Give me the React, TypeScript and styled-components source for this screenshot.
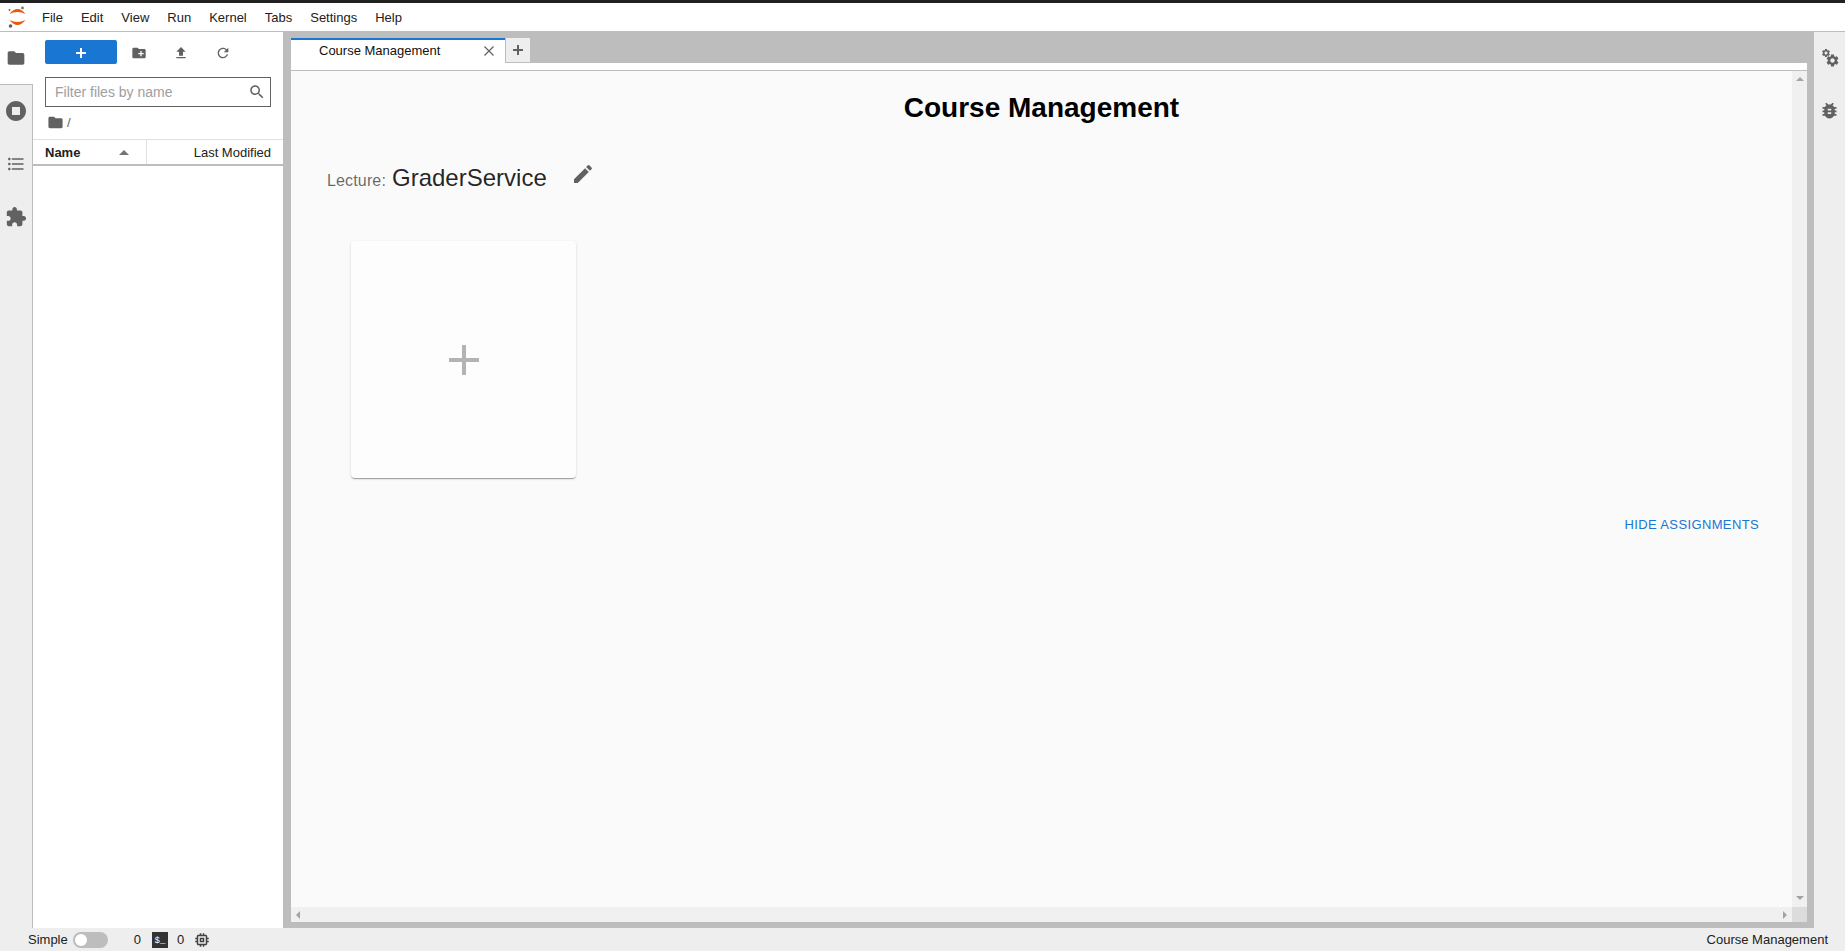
import React from "react";
import styled, { createGlobalStyle } from "styled-components";

const GlobalStyle = createGlobalStyle`
  html, body {
    margin: 0;
    padding: 0;
    height: 100%;
    overflow: hidden;
    font-family: "Liberation Sans", Arial, sans-serif;
    color: #212121;
  }
  * { box-sizing: border-box; }
`;

const Shell = styled.div`
  display: flex;
  flex-direction: column;
  width: 1845px;
  height: 951px;
  background: #eeeeee;
`;

const MenuBar = styled.div`
  display: flex;
  align-items: center;
  height: 32px;
  flex: none;
  background: #fff;
  border-top: 3px solid #212121;
  border-bottom: 1px solid #bdbdbd;
  font-size: 13px;
`;

const LogoSlot = styled.div`
  display: flex;
  align-items: center;
  justify-content: center;
  width: 33px;
  height: 100%;
`;

const MenuItem = styled.div`
  padding: 2px 9px 0;
  line-height: 28px;
  color: #212121;
`;

const Body = styled.div`
  display: flex;
  flex: 1;
  min-height: 0;
`;

const SideBar = styled.div<{ $width: number }>`
  display: flex;
  flex-direction: column;
  flex: none;
  width: ${({ $width }) => $width}px;
  background: #eeeeee;
`;

const SideTab = styled.div<{ $active?: boolean; $edge?: boolean }>`
  display: flex;
  align-items: center;
  justify-content: center;
  height: 53px;
  padding: ${({ $active }) => ($active ? "0 1px 0 0" : "0 0 2px 0")};
  color: #616161;
  background: ${({ $active }) => ($active ? "#fff" : "transparent")};
  border-right: ${({ $active, $edge }) => ($edge && !$active ? "1px solid #bdbdbd" : "none")};
  border-bottom: ${({ $active }) => ($active ? "1px solid #bdbdbd" : "none")};
`;

const Rest = styled.div`
  flex: 1;
  border-right: 1px solid #bdbdbd;
`;

const FilePanel = styled.div`
  display: flex;
  flex-direction: column;
  flex: none;
  width: 250px;
  background: #fff;
`;

const FileToolbar = styled.div`
  display: flex;
  align-items: center;
  height: 24px;
  margin: 8px 0 0 12px;
`;

const NewButton = styled.div`
  display: flex;
  align-items: center;
  justify-content: center;
  width: 72px;
  height: 24px;
  margin-right: 1px;
  padding-top: 1px;
  background: #1976d2;
  border-radius: 2px;
  color: #fff;
`;

const ToolButton = styled.div`
  display: flex;
  align-items: center;
  justify-content: center;
  width: 42px;
  padding-top: 1px;
  color: #616161;
`;

const FilterBox = styled.div`
  display: flex;
  align-items: center;
  justify-content: space-between;
  width: 226px;
  height: 30px;
  margin: 13px 0 0 12px;
  padding: 0 4px 0 9px;
  border: 1px solid #616161;
  color: #616161;
`;

const FilterHint = styled.span`
  font-size: 14px;
  color: #9e9e9e;
`;

const Crumbs = styled.div`
  display: flex;
  align-items: center;
  gap: 3px;
  height: 18px;
  margin: 6px 0 0 14px;
  font-size: 13px;
  color: #616161;
`;

const ListHeader = styled.div`
  display: flex;
  height: 27px;
  margin-top: 8px;
  font-size: 13px;
  border-top: 1px solid #e0e0e0;
  border-bottom: 2px solid #bdbdbd;
`;

const NameColumn = styled.div`
  display: flex;
  align-items: center;
  justify-content: space-between;
  width: 114px;
  padding: 0 17px 0 12px;
  font-weight: 700;
  border-right: 1px solid #e0e0e0;
`;

const SortCaret = styled.span`
  width: 0;
  height: 0;
  border-left: 5px solid transparent;
  border-right: 5px solid transparent;
  border-bottom: 5px solid #757575;
`;

const ModifiedColumn = styled.div`
  display: flex;
  align-items: center;
  justify-content: flex-end;
  flex: 1;
  padding-right: 12px;
`;

const MainArea = styled.div`
  display: flex;
  flex-direction: column;
  flex: 1;
  min-width: 0;
  padding: 6px 7px 6px 8px;
  background: #bdbdbd;
`;

const TabStrip = styled.div`
  display: flex;
  height: 25px;
  flex: none;
`;

const DocTab = styled.div`
  display: flex;
  align-items: center;
  justify-content: space-between;
  width: 214px;
  padding: 0 10px 2px 28px;
  background: #fff;
  border-top: 2px solid #1976d2;
  font-size: 13px;
  color: #111;
`;

const AddTab = styled.div`
  display: flex;
  align-items: center;
  justify-content: center;
  width: 26px;
  height: 25px;
  background: #eeeeee;
  border: 1px solid #bdbdbd;
  border-top: none;
  color: #616161;
`;

const TabGap = styled.div`
  height: 8px;
  flex: none;
  background: #fff;
  border-bottom: 1px solid #bdbdbd;
`;

const ScrollGrid = styled.div`
  display: grid;
  flex: 1;
  min-height: 0;
  grid-template-columns: 1fr 15px;
  grid-template-rows: 1fr 15px;
`;

const Content = styled.div`
  background: #fafafa;
  overflow: hidden;
`;

const Title = styled.h1`
  margin: 20px 0 0;
  font-size: 28px;
  line-height: 34px;
  font-weight: 700;
  text-align: center;
  color: #000;
`;

const LectureRow = styled.div`
  display: flex;
  align-items: baseline;
  margin: 39px 0 0 36px;
  height: 34px;
`;

const LectureLabel = styled.span`
  font-size: 16px;
  letter-spacing: 0.15px;
  color: rgba(0, 0, 0, 0.6);
  margin-right: 6px;
`;

const LectureName = styled.span`
  font-size: 24px;
  color: rgba(0, 0, 0, 0.87);
`;

const EditSlot = styled.span`
  align-self: flex-start;
  margin: -2px 0 0 24px;
  color: #616161;
`;

const AddCard = styled.div`
  display: flex;
  align-items: center;
  justify-content: center;
  width: 225px;
  height: 237px;
  margin: 43px 0 0 60px;
  background: #fdfdfd;
  border-radius: 4px;
  box-shadow: 0 2px 1px -1px rgba(0, 0, 0, 0.2), 0 1px 1px 0 rgba(0, 0, 0, 0.14), 0 1px 3px 0 rgba(0, 0, 0, 0.12);
  color: #b3b3b3;
`;

const ActionRow = styled.div`
  display: flex;
  justify-content: flex-end;
  margin-top: 36px;
  padding-right: 33px;
`;

const TextAction = styled.span`
  font-size: 13px;
  line-height: 22px;
  letter-spacing: 0.37px;
  color: #1976d2;
`;

const Track = styled.div<{ $axis: "x" | "y" }>`
  display: flex;
  flex-direction: ${({ $axis }) => ($axis === "y" ? "column" : "row")};
  justify-content: space-between;
  align-items: center;
  padding: ${({ $axis }) => ($axis === "y" ? "6px 0 7px" : "0 5px")};
  background: #f0f0f0;
`;

const Corner = styled.div`
  background: #dcdcdc;
`;

const Arrow = styled.span<{ $dir: "up" | "down" | "left" | "right" }>`
  width: 0;
  height: 0;
  border: 4px solid transparent;
  ${({ $dir }) =>
    $dir === "up"
      ? "border-top: none; border-bottom: 4px solid #a3a3a3;"
      : $dir === "down"
      ? "border-bottom: none; border-top: 4px solid #a3a3a3;"
      : $dir === "left"
      ? "border-left: none; border-right: 4px solid #a3a3a3;"
      : "border-right: none; border-left: 4px solid #a3a3a3;"}
`;

const StatusBar = styled.div`
  display: flex;
  align-items: center;
  justify-content: space-between;
  height: 23px;
  flex: none;
  padding: 0 17px 0 28px;
  font-size: 13px;
  background: #eeeeee;
`;

const StatusLeft = styled.div`
  display: flex;
  align-items: center;
`;

const Toggle = styled.div`
  display: flex;
  align-items: center;
  width: 35px;
  height: 16px;
  margin: 0 26px 0 5px;
  padding-left: 2px;
  border-radius: 8px;
  background: #bdbdbd;

  &::before {
    content: "";
    width: 12px;
    height: 12px;
    border-radius: 50%;
    background: #fff;
  }
`;

const TerminalBadge = styled.div`
  display: flex;
  align-items: flex-end;
  justify-content: center;
  width: 16px;
  height: 16px;
  margin: 0 9px 0 11px;
  padding-bottom: 1px;
  background: #333;
  color: #fff;
  font-family: "Liberation Mono", monospace;
  font-size: 9px;
  line-height: 11px;
`;

const ChipSlot = styled.div`
  display: flex;
  margin-left: 9px;
  color: #424242;
`;

const Icon: React.FC<{ d: string; size?: number }> = ({ d, size = 24 }) => (
  <svg width={size} height={size} viewBox="0 0 24 24" fill="currentColor" style={{ display: "block" }}>
    <path d={d} />
  </svg>
);

const icons = {
  folder: "M10 4H4c-1.1 0-1.99.9-1.99 2L2 18c0 1.1.9 2 2 2h16c1.1 0 2-.9 2-2V8c0-1.1-.9-2-2-2h-8l-2-2z",
  newFolder:
    "M20 6h-8l-2-2H4c-1.11 0-1.99.89-1.99 2L2 18c0 1.11.89 2 2 2h16c1.11 0 2-.89 2-2V8c0-1.11-.89-2-2-2zm-1 8h-3v3h-2v-3h-3v-2h3V9h2v3h3v2z",
  upload: "M9 16h6v-6h4l-7-7-7 7h4zm-4 2h14v2H5z",
  refresh:
    "M17.65 6.35C16.2 4.9 14.21 4 12 4c-4.42 0-7.99 3.58-7.99 8s3.57 8 7.99 8c3.73 0 6.84-2.55 7.73-6h-2.08c-.82 2.33-3.04 4-5.65 4-3.31 0-6-2.69-6-6s2.69-6 6-6c1.66 0 3.14.69 4.22 1.78L13 11h7V4l-2.35 2.35z",
  stop: "M12 2C6.48 2 2 6.48 2 12s4.48 10 10 10 10-4.48 10-10S17.52 2 12 2zm4 14H8V8h8v8z",
  list: "M4 10.5c-.83 0-1.5.67-1.5 1.5s.67 1.5 1.5 1.5 1.5-.67 1.5-1.5-.67-1.5-1.5-1.5zm0-6c-.83 0-1.5.67-1.5 1.5S3.17 7.5 4 7.5 5.5 6.83 5.5 6 4.83 4.5 4 4.5zm0 12c-.83 0-1.5.68-1.5 1.5s.68 1.5 1.5 1.5 1.5-.68 1.5-1.5-.67-1.5-1.5-1.5zM7 19h14v-2H7v2zm0-6h14v-2H7v2zm0-8v2h14V5H7z",
  extension:
    "M20.5 11H19V7c0-1.1-.9-2-2-2h-4V3.5C13 2.12 11.88 1 10.5 1S8 2.12 8 3.5V5H4c-1.1 0-1.99.9-1.99 2v3.8H3.5c1.49 0 2.7 1.21 2.7 2.7s-1.21 2.7-2.7 2.7H2V20c0 1.1.9 2 2 2h3.8v-1.5c0-1.49 1.21-2.7 2.7-2.7 1.49 0 2.7 1.21 2.7 2.7V22H17c1.1 0 2-.9 2-2v-4h1.5c1.38 0 2.5-1.12 2.5-2.5S21.88 11 20.5 11z",
  search:
    "M15.5 14h-.79l-.28-.27C15.41 12.59 16 11.11 16 9.5 16 5.91 13.09 3 9.5 3S3 5.91 3 9.5 5.91 16 9.5 16c1.61 0 3.09-.59 4.23-1.57l.27.28v.79l5 4.99L20.49 19l-4.99-5zm-6 0C7.01 14 5 11.99 5 9.5S7.01 5 9.5 5 14 7.01 14 9.5 11.99 14 9.5 14z",
  edit: "M3 17.25V21h3.75L17.81 9.94l-3.75-3.75L3 17.25zM20.71 7.04c.39-.39.39-1.02 0-1.41l-2.34-2.34a.9959.9959 0 0 0-1.41 0l-1.83 1.83 3.75 3.75 1.83-1.83z",
  bug: "M20 8h-2.81c-.45-.78-1.07-1.45-1.82-1.96L17 4.41 15.59 3l-2.17 2.17C12.96 5.06 12.49 5 12 5c-.49 0-.96.06-1.41.17L8.41 3 7 4.41l1.62 1.63C7.88 6.55 7.26 7.22 6.81 8H4v2h2.09c-.05.33-.09.66-.09 1v1H4v2h2v1c0 .34.04.67.09 1H4v2h2.81c1.04 1.79 2.97 3 5.19 3s4.15-1.21 5.19-3H20v-2h-2.09c.05-.33.09-.66.09-1v-1h2v-2h-2v-1c0-.34-.04-.67-.09-1H20V8zm-6 8h-4v-2h4v2zm0-4h-4v-2h4v2z",
  chip: "M15 9H9v6h6V9zm-2 4h-2v-2h2v2zm8-2V9h-2V7c0-1.1-.9-2-2-2h-2V3h-2v2h-2V3H9v2H7c-1.1 0-2 .9-2 2v2H3v2h2v2H3v2h2v2c0 1.1.9 2 2 2h2v2h2v-2h2v2h2v-2h2c1.1 0 2-.9 2-2v-2h2v-2h-2v-2h2zm-4 6H7V7h10v10z",
  gear: "M19.14 12.94c.04-.3.06-.61.06-.94 0-.32-.02-.64-.07-.94l2.03-1.58c.18-.14.23-.41.12-.61l-1.92-3.32c-.12-.22-.37-.29-.59-.22l-2.39.96c-.5-.38-1.03-.7-1.62-.94l-.36-2.54c-.04-.24-.24-.41-.48-.41h-3.84c-.24 0-.43.17-.47.41l-.36 2.54c-.59.24-1.13.57-1.62.94l-2.39-.96c-.22-.08-.47 0-.59.22L2.74 8.87c-.12.21-.08.47.12.61l2.03 1.58c-.05.3-.09.63-.09.94s.02.64.07.94l-2.03 1.58c-.18.14-.23.41-.12.61l1.92 3.32c.12.22.37.29.59.22l2.39-.96c.5.38 1.03.7 1.62.94l.36 2.54c.05.24.24.41.48.41h3.84c.24 0 .44-.17.47-.41l.36-2.54c.59-.24 1.13-.56 1.62-.94l2.39.96c.22.08.47 0 .59-.22l1.92-3.32c.12-.22.07-.47-.12-.61l-2.01-1.58zM12 15.6c-1.98 0-3.6-1.62-3.6-3.6s1.62-3.6 3.6-3.6 3.6 1.62 3.6 3.6-1.62 3.6-3.6 3.6z",
};

const JupyterLogo = () => (
  <svg width="18" height="22" viewBox="0 0 18 22">
    <path d="M1.5 8Q9.5-2 17.5 8 9.5 4 1.5 8z" fill="#e8590c" />
    <path d="M1.5 14Q9.5 24 17.5 14 9.5 18 1.5 14z" fill="#e8590c" />
    <circle cx="14.5" cy="2" r="1.4" fill="#757575" />
    <circle cx="1.5" cy="4" r="0.9" fill="#616161" />
    <circle cx="2.5" cy="20" r="1.8" fill="#616161" />
  </svg>
);

const GearsIcon = () => (
  <svg width="20" height="20" viewBox="0 0 20 20" fill="currentColor">
    <svg x="1" y="0" width="10" height="10" viewBox="0 0 24 24">
      <path d={icons.gear} />
    </svg>
    <svg x="5" y="5" width="15" height="15" viewBox="0 0 24 24">
      <path d={icons.gear} />
    </svg>
  </svg>
);

const CloseIcon = () => (
  <svg width="12" height="12" viewBox="0 0 12 12" stroke="#616161" strokeWidth="1.2" fill="none">
    <path d="M1.5 1.5l9 9M10.5 1.5l-9 9" />
  </svg>
);

const PlusIcon: React.FC<{ size: number; weight: number }> = ({ size, weight }) => (
  <svg width={size} height={size} viewBox={`0 0 ${size} ${size}`} fill="currentColor">
    <rect x={0} y={(size - weight) / 2} width={size} height={weight} />
    <rect x={(size - weight) / 2} y={0} width={weight} height={size} />
  </svg>
);

const menus = ["File", "Edit", "View", "Run", "Kernel", "Tabs", "Settings", "Help"];

export default function App() {
  return (
    <Shell>
      <GlobalStyle />
      <MenuBar>
        <LogoSlot>
          <JupyterLogo />
        </LogoSlot>
        {menus.map((m) => (
          <MenuItem key={m}>{m}</MenuItem>
        ))}
      </MenuBar>
      <Body>
        <SideBar $width={33}>
          <SideTab $active>
            <Icon d={icons.folder} size={20} />
          </SideTab>
          <SideTab $edge>
            <Icon d={icons.stop} size={24} />
          </SideTab>
          <SideTab $edge>
            <Icon d={icons.list} size={20} />
          </SideTab>
          <SideTab $edge>
            <Icon d={icons.extension} size={22} />
          </SideTab>
          <Rest />
        </SideBar>
        <FilePanel>
          <FileToolbar>
            <NewButton>
              <PlusIcon size={10} weight={2} />
            </NewButton>
            <ToolButton>
              <Icon d={icons.newFolder} size={16} />
            </ToolButton>
            <ToolButton>
              <Icon d={icons.upload} size={16} />
            </ToolButton>
            <ToolButton>
              <Icon d={icons.refresh} size={16} />
            </ToolButton>
          </FileToolbar>
          <FilterBox>
            <FilterHint>Filter files by name</FilterHint>
            <Icon d={icons.search} size={18} />
          </FilterBox>
          <Crumbs>
            <Icon d={icons.folder} size={17} />
            <span>/</span>
          </Crumbs>
          <ListHeader>
            <NameColumn>
              Name
              <SortCaret />
            </NameColumn>
            <ModifiedColumn>Last Modified</ModifiedColumn>
          </ListHeader>
        </FilePanel>
        <MainArea>
          <TabStrip>
            <DocTab>
              Course Management
              <CloseIcon />
            </DocTab>
            <AddTab>
              <PlusIcon size={10} weight={2} />
            </AddTab>
          </TabStrip>
          <TabGap />
          <ScrollGrid>
            <Content>
              <Title>Course Management</Title>
              <LectureRow>
                <LectureLabel>Lecture:</LectureLabel>
                <LectureName>GraderService</LectureName>
                <EditSlot>
                  <Icon d={icons.edit} />
                </EditSlot>
              </LectureRow>
              <AddCard>
                <PlusIcon size={30} weight={4} />
              </AddCard>
              <ActionRow>
                <TextAction>HIDE ASSIGNMENTS</TextAction>
              </ActionRow>
            </Content>
            <Track $axis="y">
              <Arrow $dir="up" />
              <Arrow $dir="down" />
            </Track>
            <Track $axis="x">
              <Arrow $dir="left" />
              <Arrow $dir="right" />
            </Track>
            <Corner />
          </ScrollGrid>
        </MainArea>
        <SideBar $width={31}>
          <SideTab>
            <GearsIcon />
          </SideTab>
          <SideTab>
            <Icon d={icons.bug} size={21} />
          </SideTab>
        </SideBar>
      </Body>
      <StatusBar>
        <StatusLeft>
          Simple
          <Toggle />
          <span>0</span>
          <TerminalBadge>$_</TerminalBadge>
          <span>0</span>
          <ChipSlot>
            <Icon d={icons.chip} size={18} />
          </ChipSlot>
        </StatusLeft>
        <span>Course Management</span>
      </StatusBar>
    </Shell>
  );
}
